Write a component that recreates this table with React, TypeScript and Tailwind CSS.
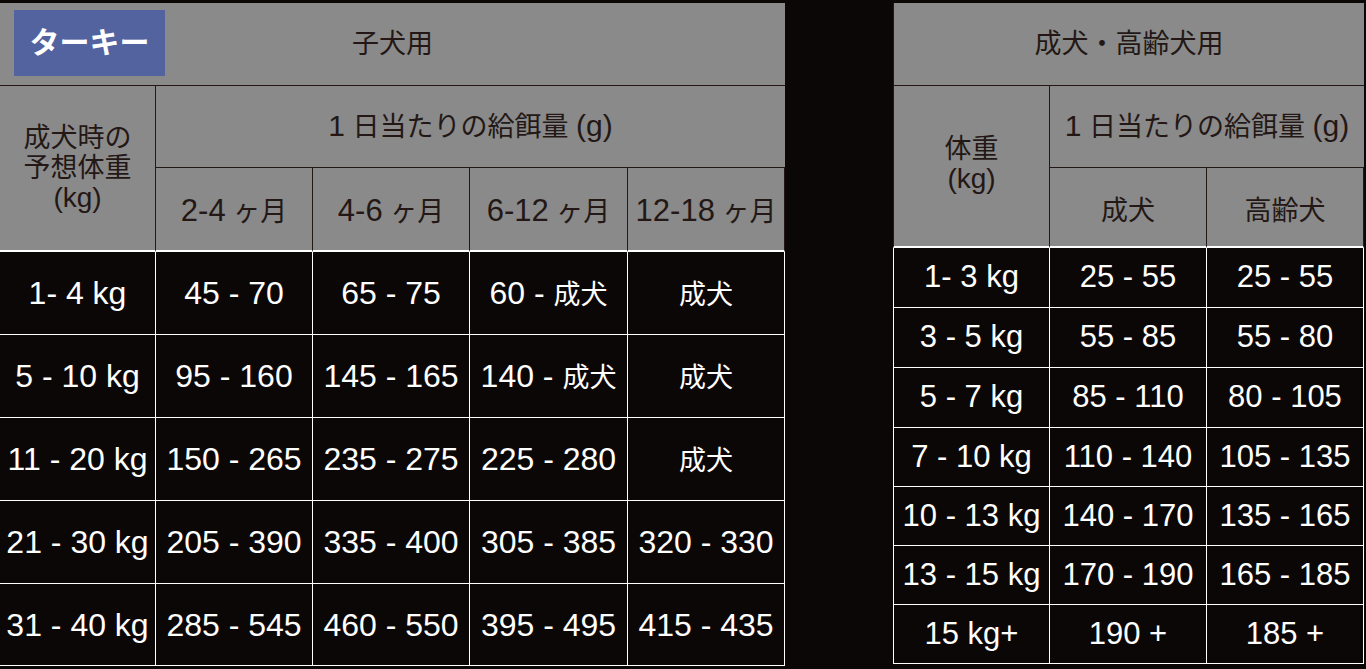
const HEAD = 'flex items-center justify-center text-center bg-[#8a8a8a] text-[#231815] text-[27px] leading-[30px] border-[#231815]'
const DATA = 'flex items-center justify-center text-center whitespace-nowrap bg-[#0b0707] text-white border-white'

function J({ children }: { children: React.ReactNode }) {
  return <span className="text-[27px]">{children}</span>
}

function L({ children }: { children: React.ReactNode }) {
  return <span className="text-[30px]">{children}</span>
}

const puppyRows: Array<[string, string, string, string, string]> = [
  ['1- 4 kg', '45 - 70', '65 - 75', '60 - 成犬', '成犬'],
  ['5 - 10 kg', '95 - 160', '145 - 165', '140 - 成犬', '成犬'],
  ['11 - 20 kg', '150 - 265', '235 - 275', '225 - 280', '成犬'],
  ['21 - 30 kg', '205 - 390', '335 - 400', '305 - 385', '320 - 330'],
  ['31 - 40 kg', '285 - 545', '460 - 550', '395 - 495', '415 - 435'],
]

const adultRows: Array<[string, string, string]> = [
  ['1- 3 kg', '25 - 55', '25 - 55'],
  ['3 - 5 kg', '55 - 85', '55 - 80'],
  ['5 - 7 kg', '85 - 110', '80 - 105'],
  ['7 - 10 kg', '110 - 140', '105 - 135'],
  ['10 - 13 kg', '140 - 170', '135 - 165'],
  ['13 - 15 kg', '170 - 190', '165 - 185'],
  ['15 kg+', '190 +', '185 +'],
]

// split 成犬 out so the kanji sit a bit smaller than the digits
function Value({ text }: { text: string }) {
  if (text.includes('成犬')) {
    const [pre] = text.split('成犬')
    return (
      <span className="whitespace-pre">
        {pre}
        <J>成犬</J>
      </span>
    )
  }
  return <span>{text}</span>
}

function DailyAmount() {
  return (
    <span>
      <L>1</L>&nbsp;日当たりの給餌量&nbsp;<L>(g)</L>
    </span>
  )
}

function PuppyTable() {
  return (
    <div className="grid w-[785px] shrink-0 grid-cols-[156px_157px_157px_158px_157px] grid-rows-[83px_82px_84px_83px_83px_83px_83px_82px]">
      <div className={`${HEAD} relative col-span-5 border-b`}>
        <span className="absolute left-[14px] top-[7px] flex h-[66px] w-[151px] items-center justify-center bg-[#5263a0] text-[30px] font-bold text-white">
          ターキー
        </span>
        子犬用
      </div>
      <div className={`${HEAD} row-span-2 flex-col border-r border-b-2 border-b-white`}>
        <span>成犬時の</span>
        <span>予想体重</span>
        <span className="text-[28px]">(kg)</span>
      </div>
      <div className={`${HEAD} col-span-4 border-b`}>
        <DailyAmount />
      </div>
      {['2-4', '4-6', '6-12', '12-18'].map((m) => (
        <div key={m} className={`${HEAD} border-r border-b-2 border-b-white pt-1`}>
          <span>
            <span className="text-[31px]">{m}</span>&nbsp;ヶ月
          </span>
        </div>
      ))}
      {puppyRows.map((row) =>
        row.map((cell, i) => (
          <div key={row[0] + i} className={`${DATA} border-r border-b text-[32px]`}>
            <Value text={cell} />
          </div>
        )),
      )}
    </div>
  )
}

function AdultTable() {
  return (
    <div className="grid w-[471px] shrink-0 grid-cols-[157px_157px_157px] grid-rows-[83px_82px_80px_60px_60px_60px_59px_59px_59px_59px]">
      <div className={`${HEAD} col-span-3 border-b border-l`}>成犬・高齢犬用</div>
      <div className={`${HEAD} row-span-2 flex-col border-l border-r border-b-2 border-b-white pb-1`}>
        <span>体重</span>
        <span className="text-[28px]">(kg)</span>
      </div>
      <div className={`${HEAD} col-span-2 border-b`}>
        <DailyAmount />
      </div>
      <div className={`${HEAD} border-r border-b-2 border-b-white pt-2`}>成犬</div>
      <div className={`${HEAD} border-r border-b-2 border-b-white pt-2`}>高齢犬</div>
      {adultRows.map((row) =>
        row.map((cell, i) => (
          <div
            key={row[0] + i}
            className={`${DATA} border-r border-b text-[31px] ${i === 0 ? 'border-l' : ''}`}
          >
            {cell}
          </div>
        )),
      )}
    </div>
  )
}

export default function App() {
  return (
    <div className="flex h-[669px] w-[1366px] gap-[108px] overflow-hidden bg-[#0b0707] pt-[3px] font-['Liberation_Sans','Noto_Sans_CJK_JP',sans-serif]">
      <PuppyTable />
      <AdultTable />
    </div>
  )
}
